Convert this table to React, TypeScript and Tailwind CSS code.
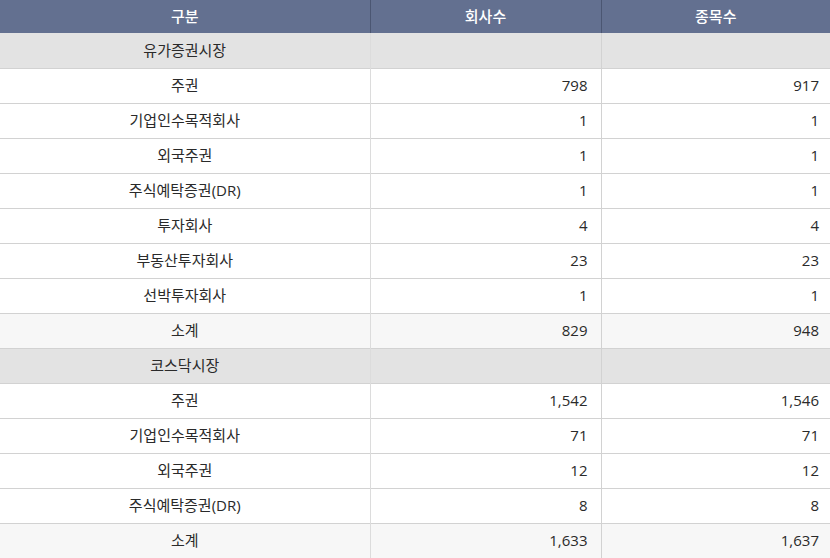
import React from "react";

type Row = {
  label: string;
  companies?: string;
  items?: string;
  kind: "group" | "item" | "subtotal";
};

const rows: Row[] = [
  { label: "유가증권시장", kind: "group" },
  { label: "주권", companies: "798", items: "917", kind: "item" },
  { label: "기업인수목적회사", companies: "1", items: "1", kind: "item" },
  { label: "외국주권", companies: "1", items: "1", kind: "item" },
  { label: "주식예탁증권(DR)", companies: "1", items: "1", kind: "item" },
  { label: "투자회사", companies: "4", items: "4", kind: "item" },
  { label: "부동산투자회사", companies: "23", items: "23", kind: "item" },
  { label: "선박투자회사", companies: "1", items: "1", kind: "item" },
  { label: "소계", companies: "829", items: "948", kind: "subtotal" },
  { label: "코스닥시장", kind: "group" },
  { label: "주권", companies: "1,542", items: "1,546", kind: "item" },
  { label: "기업인수목적회사", companies: "71", items: "71", kind: "item" },
  { label: "외국주권", companies: "12", items: "12", kind: "item" },
  { label: "주식예탁증권(DR)", companies: "8", items: "8", kind: "item" },
  { label: "소계", companies: "1,633", items: "1,637", kind: "subtotal" },
];

const rowBg = (kind: Row["kind"]) =>
  kind === "group" ? "bg-[#e3e3e3]" : kind === "subtotal" ? "bg-[#f7f7f7]" : "bg-white";

export default function App() {
  return (
    <div
      className="w-[830px] h-[558px] overflow-hidden bg-white text-[15px] text-[#2a2a2a]"
      style={{ fontFamily: '"Open Sans", "Noto Sans CJK KR", sans-serif' }}
    >
      <table className="w-full border-collapse table-fixed">
        <colgroup>
          <col className="w-[370px]" />
          <col className="w-[231px]" />
          <col />
        </colgroup>
        <thead>
          <tr className="h-[33px] bg-[#637090] text-white text-[15px]">
            <th className="font-medium border-r border-[#4b5672]">구분</th>
            <th className="font-medium border-r border-[#4b5672]">회사수</th>
            <th className="font-medium">종목수</th>
          </tr>
        </thead>
        <tbody>
          {rows.map((r, i) => (
            <tr key={i} className={`h-[35px] border-b border-[#d2d2d2] ${rowBg(r.kind)}`}>
              <td className="relative z-10 text-center border-r border-[#dcdcdc] shadow-[3px_0_7px_rgba(0,0,0,0.13)]">
                {r.label}
              </td>
              <td className="text-right pr-[13px] border-r border-[#d2d2d2]">{r.companies}</td>
              <td className="text-right pr-[11px]">{r.items}</td>
            </tr>
          ))}
        </tbody>
      </table>
    </div>
  );
}
